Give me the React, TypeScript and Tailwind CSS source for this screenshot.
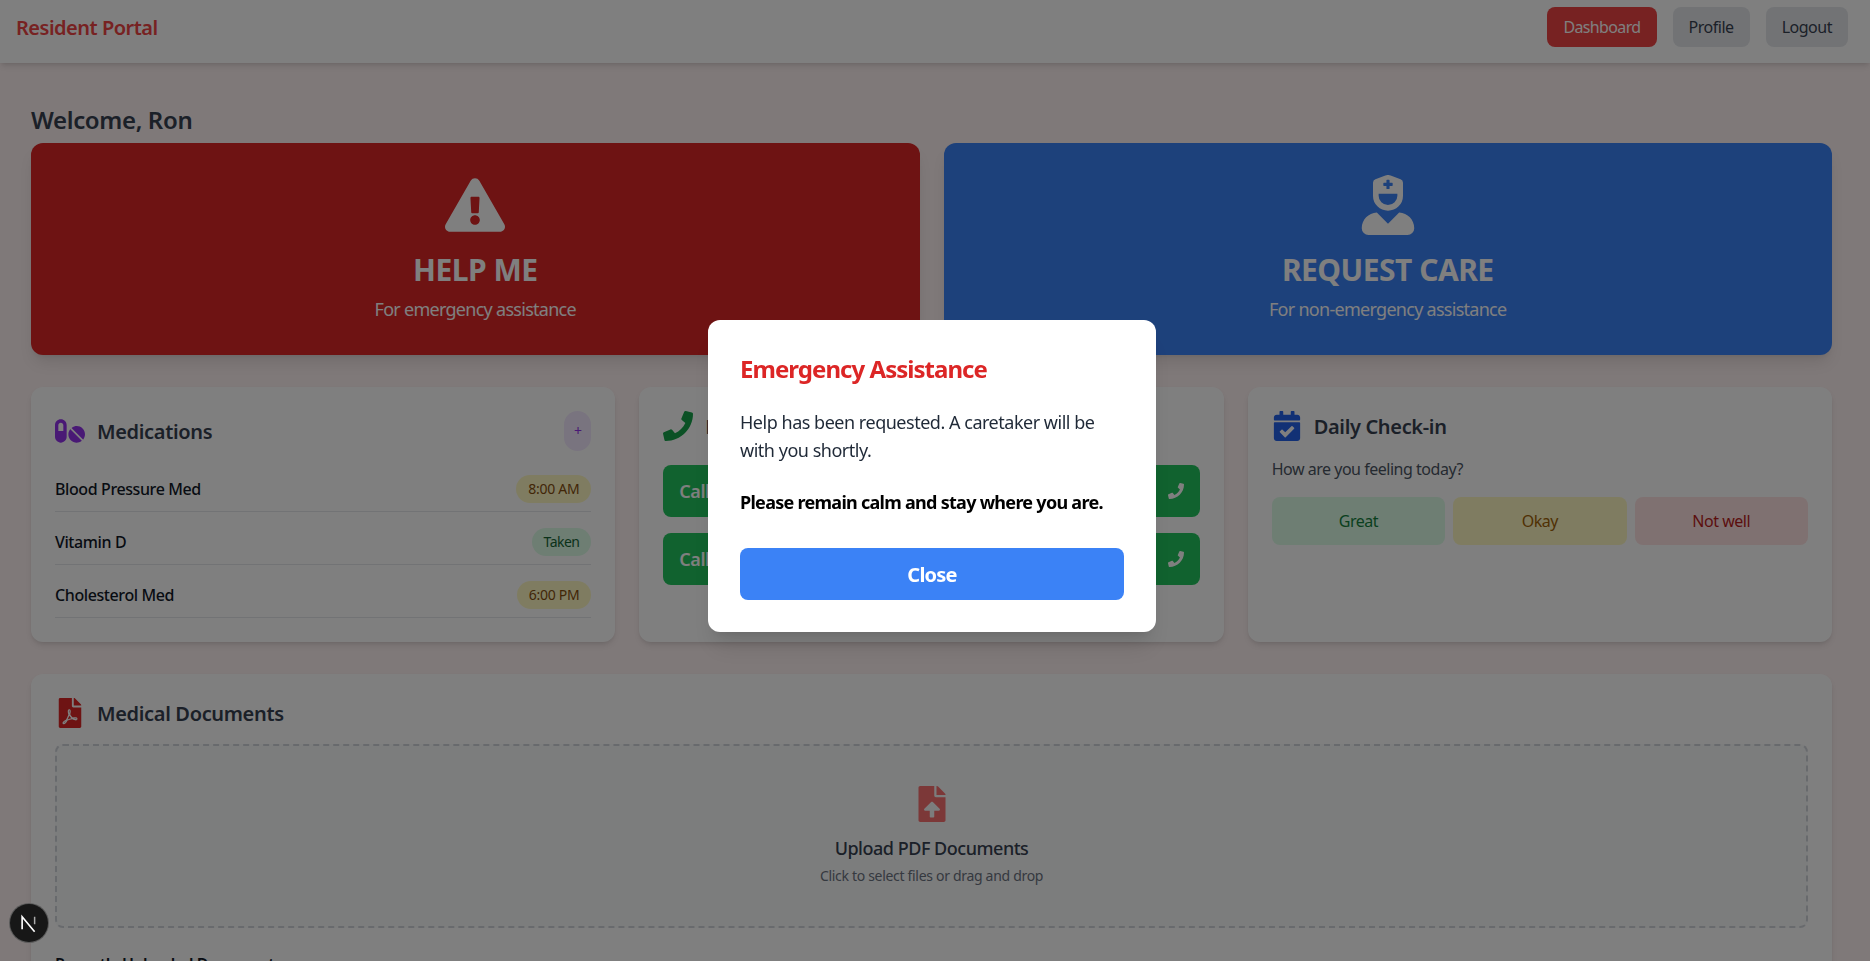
import { FaCalendarCheck, FaExclamationTriangle, FaFilePdf, FaFileUpload, FaPhone, FaPills, FaUserNurse } from "react-icons/fa";

const meds = [
  { name: "Blood Pressure Med", time: "8:00 AM", taken: false },
  { name: "Vitamin D", time: "Taken", taken: true },
  { name: "Cholesterol Med", time: "6:00 PM", taken: false },
];

const App = () => {
  return (
    <div className="relative h-screen overflow-hidden bg-[#fef2f2] tracking-[-0.03em] [font-family:'Noto_Sans',sans-serif]">
      <nav className="flex h-[63px] items-start justify-between bg-white pl-4 pr-[22px] pt-[7px] shadow-md">
        <span className="text-xl font-semibold leading-[42px] tracking-[-0.025em] text-[#ef4444]">Resident Portal</span>
        <div className="flex gap-4">
          <button className="h-10 rounded-lg bg-[#ef4444] px-4 tracking-[-0.04em] text-white">Dashboard</button>
          <button className="h-10 rounded-lg bg-[#e5e7eb] px-4 text-[#374151]">Profile</button>
          <button className="h-10 rounded-lg bg-[#e5e7eb] px-4 text-[#374151]">Logout</button>
        </div>
      </nav>

      <main className="pl-[31px] pr-[38px] pt-[41px]">
        <h1 className="mb-[7px] text-2xl font-semibold tracking-[-0.015em] text-[#374151]">Welcome, Ron</h1>

        <div className="mb-8 grid grid-cols-2 gap-6">
          <button className="flex flex-col items-center rounded-xl bg-[#dc2626] p-8 text-white shadow-lg">
            <FaExclamationTriangle size={60} />
            <span className="mt-[17px] text-3xl font-bold tracking-[-0.017em]">HELP ME</span>
            <span className="mt-[7px] text-lg tracking-[-0.04em]">For emergency assistance</span>
          </button>
          <button className="flex flex-col items-center rounded-xl bg-[#3b82f6] p-8 text-white shadow-lg">
            <FaUserNurse size={60} />
            <span className="mt-[17px] text-3xl font-bold tracking-[-0.017em]">REQUEST CARE</span>
            <span className="mt-[7px] text-lg tracking-[-0.04em]">For non-emergency assistance</span>
          </button>
        </div>

        <div className="mb-8 grid grid-cols-3 gap-6">
          <section className="rounded-xl bg-white p-6 shadow-md">
            <div className="mb-4 flex h-10 items-center justify-between">
              <div className="flex items-center gap-3">
                <FaPills size={30} className="text-[#9333ea]" />
                <h2 className="pt-0.5 text-xl font-semibold tracking-[-0.017em] text-[#374151]">Medications</h2>
              </div>
              <button className="h-10 w-[27px] rounded-full bg-[#f3e8ff] text-sm text-[#9333ea]">+</button>
            </div>
            <ul className="space-y-2">
              {meds.map((med) => (
                <li key={med.name} className="flex items-center justify-between border-b border-[#e5e7eb] py-2">
                  <span className="font-medium tracking-[-0.025em] text-[#111827]">{med.name}</span>
                  <span
                    className={
                      med.taken
                        ? "rounded-full bg-[#dcfce7] px-3 py-0.5 text-sm leading-6 tracking-[-0.04em] text-[#166534]"
                        : "rounded-full bg-[#fef9c3] px-3 py-0.5 text-sm leading-6 tracking-[-0.02em] text-[#854d0e]"
                    }
                  >
                    {med.time}
                  </span>
                </li>
              ))}
            </ul>
          </section>

          <section className="rounded-xl bg-white p-6 shadow-md">
            <div className="mb-6 flex items-center gap-3">
              <FaPhone size={30} className="text-[#16a34a]" />
              <h2 className="pt-0.5 text-xl font-semibold tracking-[-0.017em] text-[#374151]">Emergency Contacts</h2>
            </div>
            <div className="space-y-4">
              <button className="flex h-[52px] w-full items-center justify-between rounded-lg bg-[#22c55e] px-4 text-lg font-semibold text-white">
                Call Caretaker
                <FaPhone size={16} />
              </button>
              <button className="flex h-[52px] w-full items-center justify-between rounded-lg bg-[#22c55e] px-4 text-lg font-semibold text-white">
                Call Family
                <FaPhone size={16} />
              </button>
            </div>
          </section>

          <section className="rounded-xl bg-white p-6 shadow-md">
            <div className="mb-4 flex items-center gap-3">
              <FaCalendarCheck size={30} className="text-[#2563eb]" />
              <h2 className="pt-0.5 text-xl font-semibold tracking-[-0.017em] text-[#374151]">Daily Check-in</h2>
            </div>
            <p className="mb-4 text-[#4b5563]">How are you feeling today?</p>
            <div className="grid grid-cols-3 gap-2">
              <button className="h-12 rounded-lg bg-[#dcfce7] text-[#15803d]">Great</button>
              <button className="h-12 rounded-lg bg-[#fef9c3] text-[#a16207]">Okay</button>
              <button className="h-12 rounded-lg bg-[#fee2e2] text-[#b91c1c]">Not well</button>
            </div>
          </section>
        </div>

        <section className="rounded-xl bg-white p-6 shadow-md">
          <div className="mb-4 flex items-center gap-3">
            <FaFilePdf size={30} className="text-[#dc2626]" />
            <h2 className="pt-0.5 text-xl font-semibold tracking-[-0.017em] text-[#374151]">Medical Documents</h2>
          </div>
          <div className="flex flex-col items-center rounded-lg border-2 border-dashed border-[#d1d5db] bg-[#f9fafb] p-10">
            <FaFileUpload size={36} className="mb-3 text-[#f87171]" />
            <p className="text-lg font-medium text-[#374151]">Upload PDF Documents</p>
            <p className="mt-1 text-sm tracking-[-0.022em] text-[#6b7280]">Click to select files or drag and drop</p>
          </div>
          <h3 className="mt-6 font-semibold text-[#111827]">Recently Uploaded Documents</h3>
        </section>
      </main>

      <div className="fixed inset-0 flex items-center justify-center bg-black/50 pb-[9px] pr-1.5">
        <div className="w-[448px] rounded-xl bg-white p-8 shadow-xl">
          <h2 className="mb-[23px] pt-px text-2xl font-bold tracking-[-0.04em] text-[#dc2626]">Emergency Assistance</h2>
          <p className="mb-6 text-lg text-[#1f2937]">Help has been requested. A caretaker will be with you shortly.</p>
          <p className="mb-8 text-lg font-bold tracking-[-0.04em] text-black">Please remain calm and stay where you are.</p>
          <button className="h-[52px] w-full rounded-lg bg-[#3b82f6] pt-0.5 text-xl font-bold tracking-[-0.04em] text-white">Close</button>
        </div>
      </div>

      <div className="fixed bottom-[19px] left-2.5 flex h-[38px] w-[38px] items-center justify-center rounded-full bg-[#171717] ring-1 ring-[#5a5a5a]">
        <svg viewBox="0 0 16 16" className="h-5 w-5" fill="none">
          <path d="M2.5 13V3l10 12" stroke="#fff" strokeWidth="1.3" />
          <path d="M12.5 3v6" stroke="#aaa" strokeWidth="1.2" />
        </svg>
      </div>
    </div>
  );
};

export default App;
